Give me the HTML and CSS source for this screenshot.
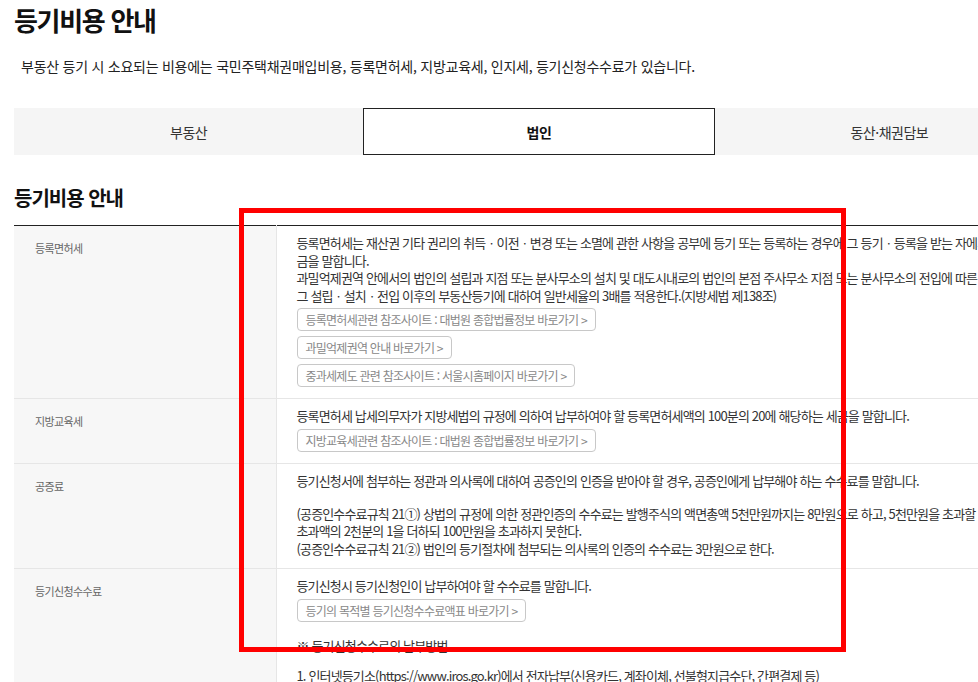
FILE: index.html
```html
<!DOCTYPE html>
<html lang="ko">
<head>
    <meta charset="UTF-8">
    <title>등기비용 안내</title>
    <link rel="stylesheet" href="styles.css">
</head>
<body>
    <div class="container">
        <h1 class="page-title">등기비용 안내</h1>
        <p class="page-desc">부동산 등기 시 소요되는 비용에는 국민주택채권매입비용, 등록면허세, 지방교육세, 인지세, 등기신청수수료가 있습니다.</p>

        <!-- Tabs -->
        <ul class="tabs">
            <li class="tab">부동산</li>
            <li class="tab active">법인</li>
            <li class="tab">동산·채권담보</li>
        </ul>

        <h2 class="section-title">등기비용 안내</h2>

        <div class="table-wrap">
            <table class="cost-table">
                <tr>
                    <th>등록면허세</th>
                    <td>
                        <p>등록면허세는 재산권 기타 권리의 취득ㆍ이전ㆍ변경 또는 소멸에 관한 사항을 공부에 등기 또는 등록하는 경우에 그 등기ㆍ등록을 받는 자에게 부과하는 세금을 말합니다.</p>
                        <p>과밀억제권역 안에서의 법인의 설립과 지점 또는 분사무소의 설치 및 대도시내로의 법인의 본점 주사무소 지점 또는 분사무소의 전입에 따른 부동산등기와</p>
                        <p>그 설립ㆍ설치ㆍ전입 이후의 부동산등기에 대하여 일반세율의 3배를 적용한다.(지방세법 제138조)</p>
                        <div class="links">
                            <a class="link-btn" href="#">등록면허세관련 참조사이트 : 대법원 종합법률정보 바로가기 &gt;</a>
                            <a class="link-btn" href="#">과밀억제권역 안내 바로가기 &gt;</a>
                            <a class="link-btn" href="#">중과세제도 관련 참조사이트 : 서울시홈페이지 바로가기 &gt;</a>
                        </div>
                    </td>
                </tr>
                <tr>
                    <th>지방교육세</th>
                    <td>
                        <p>등록면허세 납세의무자가 지방세법의 규정에 의하여 납부하여야 할 등록면허세액의 100분의 20에 해당하는 세금을 말합니다.</p>
                        <div class="links">
                            <a class="link-btn" href="#">지방교육세관련 참조사이트 : 대법원 종합법률정보 바로가기 &gt;</a>
                        </div>
                    </td>
                </tr>
                <tr>
                    <th>공증료</th>
                    <td>
                        <p>등기신청서에 첨부하는 정관과 의사록에 대하여 공증인의 인증을 받아야 할 경우, 공증인에게 납부해야 하는 수수료를 말합니다.</p>
                        <p class="gap">(공증인수수료규칙 21①) 상법의 규정에 의한 정관인증의 수수료는 발행주식의 액면총액 5천만원까지는 8만원으로 하고, 5천만원을 초과할 경우에는 그</p>
                        <p>초과액의 2천분의 1을 더하되 100만원을 초과하지 못한다.</p>
                        <p>(공증인수수료규칙 21②) 법인의 등기절차에 첨부되는 의사록의 인증의 수수료는 3만원으로 한다.</p>
                    </td>
                </tr>
                <tr>
                    <th>등기신청수수료</th>
                    <td>
                        <p>등기신청시 등기신청인이 납부하여야 할 수수료를 말합니다.</p>
                        <div class="links">
                            <a class="link-btn" href="#">등기의 목적별 등기신청수수료액표 바로가기 &gt;</a>
                        </div>
                        <p class="note-title">※ 등기신청수수료의 납부방법</p>
                        <p class="note">1. 인터넷등기소(https://www.iros.go.kr)에서 전자납부(신용카드, 계좌이체, 선불형지급수단, 간편결제 등)</p>
                        <p>2. 등기소 또는 은행에 현금으로 납부</p>
                    </td>
                </tr>
            </table>
        </div>

        <!-- highlight box over the table -->
        <div class="highlight"></div>
    </div>
</body>
</html>
```

FILE: styles.css
```css
* {
    box-sizing: border-box;
    margin: 0;
    padding: 0;
}

html, body {
    width: 100%;
    height: 100%;
    overflow: hidden;
    background: #fff;
    font-family: "Noto Sans CJK KR", "Noto Sans", sans-serif;
    color: #222;
}

.container {
    position: relative;
    width: 1050px;
    margin-left: 14px;
}

.page-title {
    font-size: 26px;
    line-height: 40px;
    font-weight: 700;
    color: #111;
    letter-spacing: -1.3px;
}

.page-desc {
    margin-top: 16px;
    padding-left: 7px;
    font-size: 14px;
    line-height: 20px;
    color: #222;
    letter-spacing: -0.25px;
}

.tabs {
    list-style: none;
    display: flex;
    margin-top: 32px;
    background: #f5f5f5;
}

.tab {
    flex: 1;
    height: 47px;
    display: flex;
    justify-content: center;
    align-items: center;
    font-size: 14px;
    color: #333;
    letter-spacing: -0.5px;
}

.tab.active {
    background: #fff;
    border: 1px solid #222;
    font-weight: 700;
    color: #111;
}

.section-title {
    margin-top: 29px;
    margin-bottom: 13px;
    font-size: 20px;
    line-height: 28px;
    font-weight: 700;
    color: #111;
    letter-spacing: -1px;
}

.cost-table {
    width: 100%;
    border-collapse: collapse;
    border-top: 1px solid #222;
}

.cost-table tr {
    border-bottom: 1px solid #e6e6e6;
}

.cost-table th {
    width: 262px;
    padding: 13px 20px 13px 21px;
    background: #f7f7f7;
    border-right: 1px solid #e6e6e6;
    text-align: left;
    vertical-align: top;
    font-size: 11px;
    line-height: 18px;
    font-weight: 400;
    color: #666;
    letter-spacing: -0.6px;
}

.cost-table td {
    padding: 8px 10px 11px 20px;
    vertical-align: top;
    font-size: 13px;
    line-height: 17.5px;
    color: #333;
    letter-spacing: -0.85px;
}

.cost-table p.gap {
    margin-top: 15.5px;
}

.cost-table p.note-title {
    margin-top: 15px;
}

.cost-table p.note {
    margin-top: 12.5px;
}

.links {
    display: flex;
    flex-direction: column;
    align-items: flex-start;
    gap: 5px;
    margin-top: 4px;
}

.link-btn {
    display: inline-block;
    height: 23px;
    line-height: 21px;
    padding: 0 8px;
    border: 1px solid #c8c8c8;
    border-radius: 4px;
    font-size: 12px;
    color: #888;
    letter-spacing: -0.75px;
    text-decoration: none;
}

.highlight {
    position: absolute;
    left: 225px;
    top: 208px;
    width: 607px;
    height: 444px;
    border: 5px solid #ff0000;
}
```
